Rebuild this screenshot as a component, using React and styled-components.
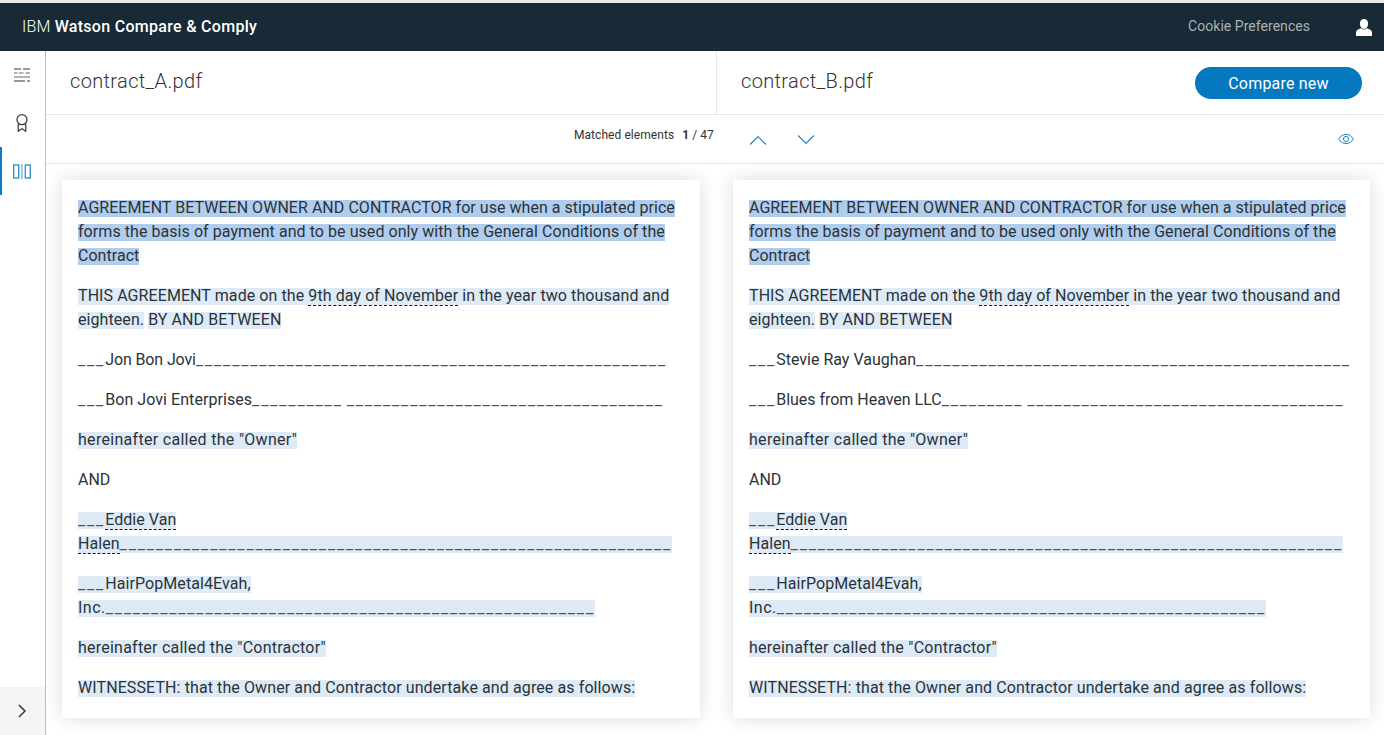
import React from "react";
import styled, { createGlobalStyle } from "styled-components";

const Global = createGlobalStyle`
  html, body { margin: 0; padding: 0; height: 100%; background: #fff; overflow: hidden; }
  #root { height: 100%; }
  * { box-sizing: border-box; }
`;
const FONT = `Roboto, "Liberation Sans", sans-serif`;

const Page = styled.div`
  width: 1384px; height: 735px; display: flex; flex-direction: column;
  font-family: ${FONT}; color: #2b3238; overflow: hidden;
`;
const Header = styled.header`
  height: 51px; flex: none; border-top: 3px solid #e9e9e9; background: #172a35;
  display: flex; align-items: center; padding: 0 12px 0 22px;
`;
const Brand = styled.div`
  font-size: 16px; font-weight: 300; color: #fff; flex: 1; letter-spacing: 0.2px; margin-top: -1px;
  b { font-weight: 500; letter-spacing: 0.3px; }
`;
const Cookie = styled.span`
  font-size: 14px; color: #a9b2b7; margin-right: 46px; letter-spacing: 0.04px; margin-top: -2px;
`;
const Body = styled.div`flex: 1; display: flex; min-height: 0;`;
const Side = styled.nav`
  width: 46px; flex: none; border-right: 1px solid #bdbdbd; display: flex; flex-direction: column;
`;
const SideItem = styled.div`
  height: 48px; display: flex; align-items: center; justify-content: center;
  border-left: 2px solid ${p => (p.$active ? "#0f7dc2" : "transparent")};
  padding-right: 3px; color: ${p => (p.$active ? "#2a8dcb" : "#333")};
`;
const SideSpacer = styled.div`flex: 1;`;
const Collapse = styled.div`
  height: 48px; background: #f5f5f5; display: flex; align-items: center; justify-content: center; color: #333;
  padding-right: 2px;
`;
const Main = styled.main`flex: 1; display: flex; flex-direction: column; min-width: 0;`;
const TitleRow = styled.div`
  height: 64px; flex: none; display: grid; grid-template-columns: 671px 1fr; border-bottom: 1px solid #e8e8e8;
`;
const TitleCell = styled.div`
  display: flex; align-items: center; justify-content: space-between;
  padding: 0 22px 3px 24px;
  ${p => p.$divider && "border-right: 1px solid #e8e8e8;"}
`;
const FileName = styled.h2`
  margin: 0; font-size: 20px; font-weight: 300; color: #333; letter-spacing: 0.35px;
`;
const CompareButton = styled.button`
  width: 167px; height: 32px; border: 0; border-radius: 16px; background: #0479bf; color: #fff;
  font-family: ${FONT}; font-size: 16px; font-weight: 400; margin-top: 3px; letter-spacing: 0.2px; padding: 2px 0 0;
`;
const Toolbar = styled.div`
  height: 49px; flex: none; border-bottom: 1px solid #e4e4e4; display: flex; align-items: center;
  padding: 0 30px 0 528px; color: #333;
`;
const Matched = styled.span`
  font-size: 12px; width: 140px; letter-spacing: 0.06px; margin-top: -9px; white-space: nowrap;
  b { font-weight: 700; margin-left: 5px; margin-right: 3px; }
`;
const Chevrons = styled.div`
  display: flex; gap: 30px; margin-left: 35px; margin-top: 2px; flex: 1; color: #1c86c8;
`;
const Docs = styled.div`
  flex: 1; display: grid; grid-template-columns: 638px 637px; gap: 33px; padding: 16px 0 0 16px; min-height: 0;
`;
const Card = styled.article`
  height: 538px; background: #fff; box-shadow: 0 0 18px rgba(0, 0, 0, 0.14); padding: 16px 16px 0;
`;
const Para = styled.p`
  margin: 0 0 16px; font-size: 16px; line-height: 24px; white-space: nowrap; letter-spacing: ${p => p.$ls}px;
`;
const tint = { s: "#b1cdee", m: "#deebf7" };
const Run = styled.span`
  background-image: ${p =>
    p.$k ? `linear-gradient(transparent 2px, ${tint[p.$k]} 2px)` : "none"};
  ${p => p.$d && "border-bottom: 1px dashed #111;"}
  ${p => p.$ls != null && `letter-spacing: ${p.$ls}px;`}
`;
const Rule = styled.span`
  letter-spacing: 1.84px;
  color: #4a5157;
`;

const u = n => "_".repeat(n);
const para = (ls, ...lines) => ({ ls, lines });

const head = para(
  0.04,
  [{ t: "AGREEMENT BETWEEN OWNER AND CONTRACTOR for use when a stipulated price", k: "s" }],
  [{ t: "forms the basis of payment and to be used only with the General Conditions of the", k: "s", ls: 0.06 }],
  [{ t: "Contract", k: "s" }]
);
const shared1 = para(
  0.08,
  [
    { t: "THIS AGREEMENT made on the ", k: "m" },
    { t: "9th day of November", k: "m", d: 1 },
    { t: " in the year two thousand and", k: "m" },
  ],
  [{ t: "eighteen.", k: "m" }, { t: " " }, { t: "BY AND BETWEEN", k: "m" }]
);

const buildDoc = (owner, ownerLs, company, companyLs) => [
  head,
  shared1,
  para(ownerLs, [{ t: owner }]),
  para(companyLs, [{ t: company }]),
  para(0.3, [{ t: 'hereinafter called the "Owner"', k: "m" }]),
  para(0, [{ t: "AND" }]),
  para(
    0.05,
    [{ t: u(3), k: "m" }, { t: "Eddie Van", k: "m", d: 1 }],
    [{ t: "Halen", k: "m", d: 1 }, { t: u(61), k: "m" }]
  ),
  para(
    0.08,
    [{ t: u(3) + "HairPopMetal4Evah,", k: "m" }],
    [{ t: "Inc.", k: "m", ls: 0.5 }, { t: u(54), k: "m" }]
  ),
  para(0.23, [{ t: 'hereinafter called the "Contractor"', k: "m" }]),
  para(0.1, [{ t: "WITNESSETH: that the Owner and Contractor undertake and agree as follows:", k: "m" }]),
];

const docA = buildDoc(`${u(3)}Jon Bon Jovi${u(52)}`, -0.12, `${u(3)}Bon Jovi Enterprises${u(10)} ${u(35)}`, 0.06);
const docB = buildDoc(`${u(3)}Stevie Ray Vaughan${u(48)}`, 0, `${u(3)}Blues from Heaven LLC${u(9)} ${u(35)}`, -0.02);

const withRules = text =>
  text.split(/(_+)/).map((part, i) =>
    part.startsWith("_") ? <Rule key={i}>{part}</Rule> : part
  );

const Doc = ({ paras }) => (
  <Card>
    {paras.map((p, i) => (
      <Para key={i} $ls={p.ls}>
        {p.lines.map((runs, j) => (
          <React.Fragment key={j}>
            {j > 0 && <br />}
            {runs.map((r, n) => (
              <Run key={n} $k={r.k} $d={r.d} $ls={r.ls}>{withRules(r.t)}</Run>
            ))}
          </React.Fragment>
        ))}
      </Para>
    ))}
  </Card>
);

const ListIcon = () => (
  <svg width="16" height="14" viewBox="0 0 16 14" fill="none" stroke="currentColor" strokeWidth="1">
    <path d="M0 1h7M9 1h7M0 13h11M13 13h3" strokeWidth="1.2" />
    <path d="M0 5h3.500M5 5h4.500M11.500 5h4.500M0 9h16" opacity="0.75" />
  </svg>
);
const BadgeIcon = () => (
  <svg width="12" height="18" viewBox="0 0 12 18" fill="none" stroke="currentColor" strokeWidth="1.2">
    <circle cx="6" cy="5.700" r="5" />
    <path d="M2.200 10v7.200L6 14.800l3.800 2.400V10" />
  </svg>
);
const CompareIcon = () => (
  <svg width="18" height="15" viewBox="0 0 18 15" fill="none" stroke="currentColor" strokeWidth="1.3">
    <rect x=".7" y="1" width="5" height="13" />
    <rect x="12.300" y="1" width="5" height="13" />
    <path d="M9 0v15" opacity="0.65" />
  </svg>
);
const ChevronRight = () => (
  <svg width="8" height="14" viewBox="0 0 8 14" fill="none" stroke="currentColor" strokeWidth="1.5">
    <path d="M1 1l6 6-6 6" />
  </svg>
);
const Chevron = ({ up }) => (
  <svg width="18" height="10" viewBox="0 0 18 10" fill="none" stroke="currentColor" strokeWidth="1.2">
    <path d={up ? "M1 9.5l8-8 8 8" : "M1 .5l8 8 8-8"} />
  </svg>
);
const EyeIcon = () => (
  <svg width="16" height="12" viewBox="0 0 16 12" fill="none" stroke="#1c86c8" strokeWidth="1">
    <path d="M.6 6C2.400 3 5 1.400 8 1.400S13.600 3 15.400 6C13.600 9 11 10.600 8 10.600S2.400 9 .6 6z" />
    <circle cx="8" cy="6" r="2.600" />
  </svg>
);
const UserIcon = () => (
  <svg width="16" height="17" viewBox="0 0 16 17" fill="#fff">
    <path d="M8 0c2.500 0 4.100 1.900 4.100 4.600S10.600 10 8 10 3.900 7.300 3.900 4.600 5.500 0 8 0z" />
    <path d="M5 9.300C6.800 11 9.200 11 11 9.300c2.900.8 5 2.200 5 4.200V17H0v-3.500c0-2 2.100-3.400 5-4.200z" />
  </svg>
);

export default function App() {
  return (
    <Page>
      <Global />
      <Header>
        <Brand>IBM <b>Watson Compare &amp; Comply</b></Brand>
        <Cookie>Cookie Preferences</Cookie>
        <UserIcon />
      </Header>
      <Body>
        <Side>
          <SideItem><ListIcon /></SideItem>
          <SideItem><BadgeIcon /></SideItem>
          <SideItem $active><CompareIcon /></SideItem>
          <SideSpacer />
          <Collapse><ChevronRight /></Collapse>
        </Side>
        <Main>
          <TitleRow>
            <TitleCell $divider><FileName>contract_A.pdf</FileName></TitleCell>
            <TitleCell><FileName>contract_B.pdf</FileName><CompareButton>Compare new</CompareButton></TitleCell>
          </TitleRow>
          <Toolbar>
            <Matched>Matched elements <b>1</b>/ 47</Matched>
            <Chevrons><Chevron up /><Chevron /></Chevrons>
            <EyeIcon />
          </Toolbar>
          <Docs>
            <Doc paras={docA} />
            <Doc paras={docB} />
          </Docs>
        </Main>
      </Body>
    </Page>
  );
}
